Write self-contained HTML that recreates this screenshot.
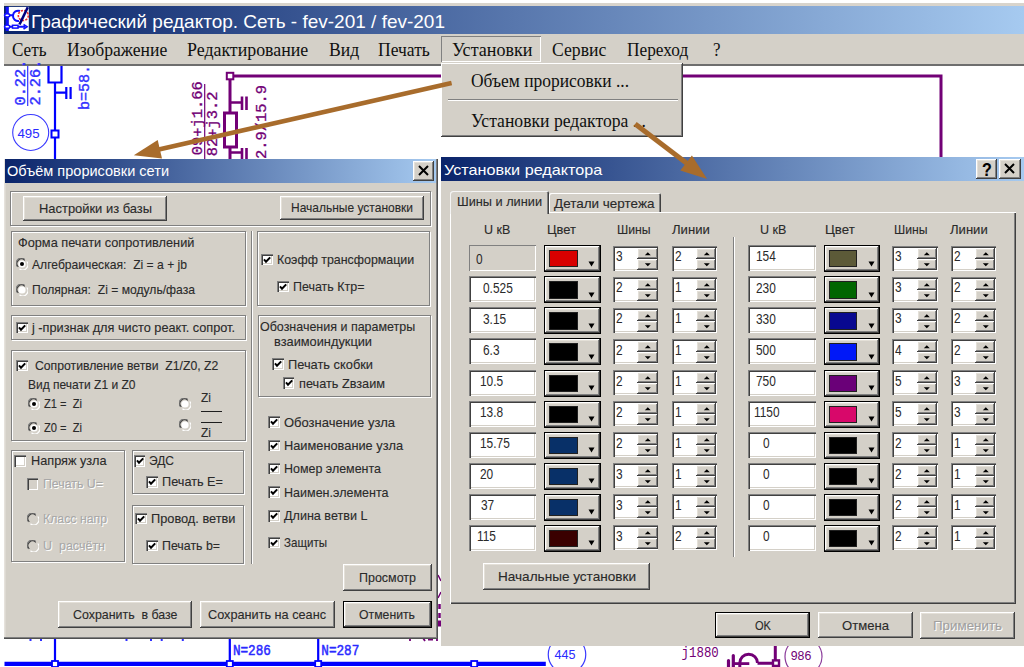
<!DOCTYPE html><html><head><meta charset="utf-8"><style>
*{margin:0;padding:0;box-sizing:border-box}
html,body{width:1024px;height:667px;overflow:hidden;background:#fff;position:relative}
.a{position:absolute}
.t{white-space:pre;transform-origin:0 0}
.d{-webkit-text-stroke:0.12px currentColor}
.btn{background:#d4d0c8;box-shadow:inset -1px -1px #404040,inset 1px 1px #fff,inset -2px -2px #808080,inset 2px 2px #e4e0d8}
.btnd{background:#d4d0c8;border:1px solid #000;box-shadow:inset -1px -1px #404040,inset 1px 1px #fff,inset -2px -2px #808080,inset 2px 2px #e4e0d8}
.grp{border:1px solid #808080;box-shadow:inset 1px 1px #fff,1px 1px #fff}
.chk{box-shadow:inset 1px 1px #808080,inset 2px 2px #404040,inset -1px -1px #fff,inset -2px -2px #d4d0c8}
.edit{background:#fff;box-shadow:inset 1px 1px #808080,inset 2px 2px #404040,inset -1px -1px #fff,inset -2px -2px #d4d0c8}
</style></head><body>
<div class="a " style="left:4px;top:3px;width:1020px;height:2.5px;background:#d8d4cc;"></div>
<div class="a " style="left:4px;top:5.5px;width:1020px;height:28.8px;background:linear-gradient(90deg,#0a246a 0%,#a6caf0 100%);"></div>
<svg class="a" style="left:0;top:0" width="40" height="40">
<rect x="8.5" y="6.9" width="20.3" height="24.1" fill="#fff"/>
<path d="M7.2 6.9 V31" stroke="#1010ff" stroke-width="3"/>
<path d="M7 15.3 H13 M7 26.7 H25" stroke="#1010ff" stroke-width="2"/>
<ellipse cx="7.2" cy="15.3" rx="2.6" ry="1.7" fill="#fff" stroke="#1010ff" stroke-width="1.6"/>
<ellipse cx="7.2" cy="26.7" rx="2.6" ry="1.7" fill="#fff" stroke="#1010ff" stroke-width="1.6"/>
<path d="M20 11 A5.2 5.2 0 1 0 19 21" stroke="#1010ff" stroke-width="2" fill="none"/>
<rect x="12.5" y="25.3" width="5.5" height="2.8" fill="#fff" stroke="#1010ff" stroke-width="1.5"/>
<path d="M23.5 24.5 L27 26.8 L23.5 29" stroke="#1010ff" stroke-width="1.6" fill="none"/>
<circle cx="23.3" cy="15.5" r="5" stroke="#f03030" stroke-width="1.6" stroke-dasharray="2.2 1.2" fill="none"/>
<path d="M27.8 7.2 L19.5 24.5" stroke="#000080" stroke-width="2.6"/>
</svg>
<div class="a t " style="left:31px;top:11.75px;font:19px/19px 'Liberation Sans',sans-serif;color:#fff;transform:scaleX(0.9995);">Графический редактор. Сеть - fev-201 / fev-201</div>
<div class="a " style="left:4px;top:34.3px;width:1020px;height:29.3px;background:#d4d0c8;"></div>
<div class="a " style="left:4px;top:63.6px;width:1020px;height:2px;background:#6e6e6e;"></div>
<div class="a " style="left:441.2px;top:36.2px;width:100.3px;height:25.8px;box-shadow:inset 1px 1px #808080,inset -1px -1px #fff;"></div>
<div class="a t " style="left:12.3px;top:40.31px;font:19px/19px 'Liberation Serif',serif;color:#101010;transform:scaleX(0.9006);">Сеть</div>
<div class="a t " style="left:66.8px;top:40.31px;font:19px/19px 'Liberation Serif',serif;color:#101010;transform:scaleX(0.9253);">Изображение</div>
<div class="a t " style="left:187.4px;top:40.31px;font:19px/19px 'Liberation Serif',serif;color:#101010;transform:scaleX(0.9405);">Редактирование</div>
<div class="a t " style="left:328.8px;top:40.31px;font:19px/19px 'Liberation Serif',serif;color:#101010;transform:scaleX(0.9290);">Вид</div>
<div class="a t " style="left:378.2px;top:40.31px;font:19px/19px 'Liberation Serif',serif;color:#101010;transform:scaleX(0.9226);">Печать</div>
<div class="a t " style="left:451.8px;top:40.31px;font:19px/19px 'Liberation Serif',serif;color:#101010;transform:scaleX(0.9502);">Установки</div>
<div class="a t " style="left:551.7px;top:40.31px;font:19px/19px 'Liberation Serif',serif;color:#101010;transform:scaleX(0.9296);">Сервис</div>
<div class="a t " style="left:626.8px;top:40.31px;font:19px/19px 'Liberation Serif',serif;color:#101010;transform:scaleX(0.9103);">Переход</div>
<div class="a t " style="left:713px;top:40.31px;font:19px/19px 'Liberation Serif',serif;color:#101010;transform:scaleX(0.8894);">?</div>
<svg class="a" style="left:0;top:0" width="1024" height="667"><path d="M55 83 V159" stroke="#0000ff" stroke-width="2.2"/><path d="M48.5 66 V82.5 H61.5 V66" stroke="#0000ff" stroke-width="2.2" fill="none"/><path d="M55 92.6 H66 M66.3 87 V99 M70.6 87 V99" stroke="#0000ff" stroke-width="2.2" fill="none"/><path d="M27.7 66 V106" stroke="#3030ff" stroke-width="1.2"/><circle cx="30.7" cy="132.5" r="18" stroke="#3a3aff" stroke-width="1.1" fill="none"/><rect x="51.5" y="130.5" width="7" height="7" stroke="#0000ff" stroke-width="2" fill="#fff"/><text transform="translate(17.5,137.5) scale(1.02,1)" font-family="Liberation Sans" font-size="13" fill="#2a2aff">495</text><text transform="translate(24.6,105.5) rotate(-90)" font-family="Liberation Mono" font-size="15.3" stroke="#3030ff" stroke-width="0.4" fill="#3030ff">0.22.</text><text transform="translate(40.3,105.5) rotate(-90)" font-family="Liberation Mono" font-size="15.3" stroke="#3030ff" stroke-width="0.4" fill="#3030ff">2.26.</text><text transform="translate(88.6,110) rotate(-90)" font-family="Liberation Mono" font-size="15" stroke="#3030ff" stroke-width="0.4" fill="#3030ff">b=58.</text><path d="M230 76 H941 V158 M230 76 V159" stroke="#720076" stroke-width="3" fill="none"/><rect x="226.8" y="72.8" width="6.5" height="6.5" stroke="#720076" stroke-width="2" fill="#fff"/><path d="M230 102.5 H243 M242 96.5 V110 M246.5 96.5 V110" stroke="#720076" stroke-width="2.6" fill="none"/><rect x="224.5" y="113" width="12" height="34" stroke="#720076" stroke-width="3" fill="#fff"/><path d="M230 152.5 H243 M242 148 V160 M246.5 148 V160" stroke="#720076" stroke-width="2.6" fill="none"/><path d="M204.7 84 V159" stroke="#720076" stroke-width="1.2"/><text transform="translate(202,155.2) rotate(-90)" font-family="Liberation Mono" font-size="15.4" stroke="#720076" stroke-width="0.3" fill="#720076">09+j1.66</text><text transform="translate(217,156.2) rotate(-90)" font-family="Liberation Mono" font-size="15.4" stroke="#720076" stroke-width="0.3" fill="#720076">82+j3.2</text><text transform="translate(266,159) rotate(-90)" font-family="Liberation Mono" font-size="15.4" stroke="#720076" stroke-width="0.3" fill="#720076">2.9/15.9</text><path d="M4.5 663.9 H545.8" stroke="#0000ff" stroke-width="4.4"/><path d="M55 638 V662 M229.8 638 V662 M318.2 638 V662" stroke="#0000ff" stroke-width="2.2"/><rect x="52" y="661" width="6" height="6" stroke="#0000ff" stroke-width="1.8" fill="#fff"/><rect x="226.8" y="661" width="6" height="6" stroke="#0000ff" stroke-width="1.8" fill="#fff"/><rect x="315.2" y="661" width="6" height="6" stroke="#0000ff" stroke-width="1.8" fill="#fff"/><rect x="471.2" y="661" width="6" height="6" stroke="#0000ff" stroke-width="1.8" fill="#fff"/><text transform="translate(232.9,655) scale(0.833,1)" font-family="Liberation Mono" font-size="15.2" stroke="#2a2aff" stroke-width="0.5" fill="#2a2aff">N=286</text><text transform="translate(321.3,655) scale(0.833,1)" font-family="Liberation Mono" font-size="15.2" stroke="#2a2aff" stroke-width="0.5" fill="#2a2aff">N=287</text><circle cx="567" cy="654.6" r="18.75" stroke="#3a3aff" stroke-width="1.2" fill="none"/><text transform="translate(554.6,659.3) scale(1,1)" font-family="Liberation Sans" font-size="12.6" fill="#2a2aff">445</text><text transform="translate(681.6,657) scale(0.867,1)" font-family="Liberation Mono" font-size="14.3" fill="#720076">j1880</text><path d="M775.3 645 V663 M757.5 663.2 H775 M739.8 668 V663 A8.8 8.8 0 0 1 757.5 663" stroke="#720076" stroke-width="3" fill="none"/><path d="M732 663.6 H749.3" stroke="#720076" stroke-width="2.8"/><path d="M728.5 660.5 V667 M733.3 655.5 V667" stroke="#720076" stroke-width="3.2" stroke-linecap="round"/><rect x="773" y="660.4" width="6" height="5.5" stroke="#720076" stroke-width="2.4" fill="#fff"/><circle cx="803.5" cy="656.5" r="18.5" stroke="#8a3a9a" stroke-width="1.2" fill="none"/><text transform="translate(790.7,659.5) scale(0.95,1)" font-family="Liberation Sans" font-size="13" fill="#720076">986</text><path d="M438 575 L441 581 M438 598 L441 592" stroke="#720076" stroke-width="1.5"/><path d="M439.5 604 V609 M439.5 613 V618" stroke="#720076" stroke-width="2.5"/><rect x="437.5" y="620.5" width="4" height="6" fill="#720076"/><path d="M410 638 V641 M423 638 L425 641 M428 639.5 H433 M437 638 V641" stroke="#720076" stroke-width="1.8"/><rect x="29.5" y="638.5" width="2" height="2.5" fill="#3030ff"/><rect x="40" y="638.5" width="2" height="2.5" fill="#3030ff"/><rect x="125.5" y="638.5" width="2" height="2.5" fill="#3030ff"/><rect x="150" y="638.5" width="2" height="2.5" fill="#3030ff"/><rect x="160.7" y="638.5" width="2" height="2.5" fill="#3030ff"/><rect x="181.8" y="638.5" width="2" height="2.5" fill="#3030ff"/></svg>
<div class="a " style="left:441px;top:62.5px;width:241.5px;height:74.5px;background:#d4d0c8;box-shadow:inset -1px -1px #404040,inset 1px 1px #fff,inset -2px -2px #808080;"></div>
<div class="a t " style="left:470.7px;top:70.81px;font:19px/19px 'Liberation Serif',serif;color:#101010;transform:scaleX(0.9181);">Объем прорисовки ...</div>
<div class="a " style="left:448px;top:98.5px;width:230px;height:1.3px;background:#808080;"></div>
<div class="a " style="left:448px;top:99.8px;width:230px;height:1.2px;background:#fff;"></div>
<div class="a t " style="left:471px;top:110.51px;font:19px/19px 'Liberation Serif',serif;color:#101010;transform:scaleX(0.9278);">Установки редактора ...</div>
<div class="a " style="left:4.3px;top:159px;width:433.9px;height:479.9px;background:#d4d0c8;box-shadow:inset -1px -1px #505050,inset -2px -2px #808080,inset 1.5px 0 #e6e2dc;"></div>
<div class="a " style="left:4.6px;top:159px;width:431px;height:24px;background:linear-gradient(90deg,#0a246a,#a6caf0);"></div>
<div class="a t " style="left:6.8px;top:163.46px;font:15px/15px 'Liberation Sans',sans-serif;color:#fff;transform:scaleX(0.9691);">Объём прорисовки сети</div>
<div class="a btn" style="left:413px;top:161px;width:20.6px;height:19.7px;"></div>
<svg class="a" style="left:413px;top:161px" width="21" height="20"><path d="M6 5 L15 14 M15 5 L6 14" stroke="#000" stroke-width="2"/></svg>
<div class="a grp" style="left:10px;top:190.5px;width:420.5px;height:35.3px;"></div>
<div class="a btn" style="left:23px;top:196px;width:144px;height:25px;"></div>
<div class="a t d" style="left:38.5px;top:201.96px;font:13px/13px 'Liberation Sans',sans-serif;color:#2a2a2a;transform:scaleX(0.9936);">Настройки из базы</div>
<div class="a btn" style="left:280.4px;top:195.7px;width:143.8px;height:24.6px;"></div>
<div class="a t d" style="left:291.3px;top:201.46px;font:13px/13px 'Liberation Sans',sans-serif;color:#2a2a2a;transform:scaleX(0.9227);">Начальные установки</div>
<div class="a grp" style="left:11px;top:230.5px;width:234.7px;height:75.9px;"></div>
<div class="a t d" style="left:18px;top:235.86px;font:13px/13px 'Liberation Sans',sans-serif;color:#2a2a2a;transform:scaleX(0.9803);">Форма печати сопротивлений</div>
<svg class="a" style="left:15.8px;top:258.4px" width="12" height="12"><path d="M1.2 8.5 A5.2 5.2 0 0 1 8.5 1.2" stroke="#808080" stroke-width="1.2" fill="none"/><path d="M2.3 8.8 A4.2 4.2 0 0 1 8.8 2.3" stroke="#404040" stroke-width="1.2" fill="none"/><path d="M3.5 10.8 A5.2 5.2 0 0 0 10.8 3.5" stroke="#fff" stroke-width="1.2" fill="none"/><circle cx="6" cy="6" r="3.6" fill="#fff"/><circle cx="6" cy="6" r="2" fill="#000"/></svg>
<div class="a t d" style="left:32px;top:257.86px;font:13px/13px 'Liberation Sans',sans-serif;color:#2a2a2a;transform:scaleX(0.9317);">Алгебраическая:  Zi = a + jb</div>
<svg class="a" style="left:15.8px;top:283.5px" width="12" height="12"><path d="M1.2 8.5 A5.2 5.2 0 0 1 8.5 1.2" stroke="#808080" stroke-width="1.2" fill="none"/><path d="M2.3 8.8 A4.2 4.2 0 0 1 8.8 2.3" stroke="#404040" stroke-width="1.2" fill="none"/><path d="M3.5 10.8 A5.2 5.2 0 0 0 10.8 3.5" stroke="#fff" stroke-width="1.2" fill="none"/><circle cx="6" cy="6" r="3.6" fill="#fff"/></svg>
<div class="a t d" style="left:32px;top:282.96px;font:13px/13px 'Liberation Sans',sans-serif;color:#2a2a2a;transform:scaleX(0.9331);">Полярная:  Zi = модуль/фаза</div>
<div class="a grp" style="left:257.3px;top:230.5px;width:173.2px;height:75.9px;"></div>
<div class="a chk" style="left:261px;top:253.6px;width:11.6px;height:11.6px;background:#fff;"><svg width="12" height="12" style="position:absolute;left:0;top:0"><path d="M3 5.4 L5 7.8 L9.2 3.4" stroke="#000" stroke-width="2" fill="none"/></svg></div>
<div class="a t d" style="left:277.2px;top:252.86px;font:13px/13px 'Liberation Sans',sans-serif;color:#2a2a2a;transform:scaleX(0.9539);">Коэфф трансформации</div>
<div class="a chk" style="left:277.2px;top:280.7px;width:11.6px;height:11.6px;background:#fff;"><svg width="12" height="12" style="position:absolute;left:0;top:0"><path d="M3 5.4 L5 7.8 L9.2 3.4" stroke="#000" stroke-width="2" fill="none"/></svg></div>
<div class="a t d" style="left:293px;top:279.96px;font:13px/13px 'Liberation Sans',sans-serif;color:#2a2a2a;transform:scaleX(0.9578);">Печать Ктр=</div>
<div class="a " style="left:250.8px;top:230.5px;width:1px;height:333.1px;background:#808080;"></div>
<div class="a " style="left:251.8px;top:230.5px;width:1px;height:333.1px;background:#fff;"></div>
<div class="a grp" style="left:11px;top:314.6px;width:234.7px;height:25.4px;"></div>
<div class="a chk" style="left:16.2px;top:321.6px;width:11.6px;height:11.6px;background:#fff;"><svg width="12" height="12" style="position:absolute;left:0;top:0"><path d="M3 5.4 L5 7.8 L9.2 3.4" stroke="#000" stroke-width="2" fill="none"/></svg></div>
<div class="a t d" style="left:31.5px;top:320.86px;font:13px/13px 'Liberation Sans',sans-serif;color:#2a2a2a;transform:scaleX(0.9782);">j -признак для чисто реакт. сопрот.</div>
<div class="a grp" style="left:258px;top:314.6px;width:172.5px;height:82.8px;"></div>
<div class="a t d" style="left:259.6px;top:319.96px;font:13px/13px 'Liberation Sans',sans-serif;color:#2a2a2a;transform:scaleX(0.9599);">Обозначения и параметры</div>
<div class="a t d" style="left:274.2px;top:335.06px;font:13px/13px 'Liberation Sans',sans-serif;color:#2a2a2a;transform:scaleX(0.9843);">взаимоиндукции</div>
<div class="a chk" style="left:272px;top:358.3px;width:11.6px;height:11.6px;background:#fff;"><svg width="12" height="12" style="position:absolute;left:0;top:0"><path d="M3 5.4 L5 7.8 L9.2 3.4" stroke="#000" stroke-width="2" fill="none"/></svg></div>
<div class="a t d" style="left:287.7px;top:357.56px;font:13px/13px 'Liberation Sans',sans-serif;color:#2a2a2a;transform:scaleX(0.9866);">Печать скобки</div>
<div class="a chk" style="left:282.8px;top:377.4px;width:11.6px;height:11.6px;background:#fff;"><svg width="12" height="12" style="position:absolute;left:0;top:0"><path d="M3 5.4 L5 7.8 L9.2 3.4" stroke="#000" stroke-width="2" fill="none"/></svg></div>
<div class="a t d" style="left:298.5px;top:376.66px;font:13px/13px 'Liberation Sans',sans-serif;color:#2a2a2a;transform:scaleX(0.9774);">печать Zвзаим</div>
<div class="a grp" style="left:11px;top:349.5px;width:234.7px;height:91.7px;"></div>
<div class="a chk" style="left:16.2px;top:359.9px;width:11.6px;height:11.6px;background:#fff;"><svg width="12" height="12" style="position:absolute;left:0;top:0"><path d="M3 5.4 L5 7.8 L9.2 3.4" stroke="#000" stroke-width="2" fill="none"/></svg></div>
<div class="a t d" style="left:34.9px;top:359.16px;font:13px/13px 'Liberation Sans',sans-serif;color:#2a2a2a;transform:scaleX(0.9400);">Сопротивление ветви  Z1/Z0, Z2</div>
<div class="a t d" style="left:28px;top:378.46px;font:13px/13px 'Liberation Sans',sans-serif;color:#2a2a2a;transform:scaleX(0.9240);">Вид печати Z1 и Z0</div>
<svg class="a" style="left:28.2px;top:398px" width="12" height="12"><path d="M1.2 8.5 A5.2 5.2 0 0 1 8.5 1.2" stroke="#808080" stroke-width="1.2" fill="none"/><path d="M2.3 8.8 A4.2 4.2 0 0 1 8.8 2.3" stroke="#404040" stroke-width="1.2" fill="none"/><path d="M3.5 10.8 A5.2 5.2 0 0 0 10.8 3.5" stroke="#fff" stroke-width="1.2" fill="none"/><circle cx="6" cy="6" r="3.6" fill="#fff"/><circle cx="6" cy="6" r="2" fill="#000"/></svg>
<div class="a t d" style="left:43.9px;top:397.46px;font:13px/13px 'Liberation Sans',sans-serif;color:#2a2a2a;transform:scaleX(0.8553);">Z1 =  Zi</div>
<svg class="a" style="left:28.2px;top:421.5px" width="12" height="12"><path d="M1.2 8.5 A5.2 5.2 0 0 1 8.5 1.2" stroke="#808080" stroke-width="1.2" fill="none"/><path d="M2.3 8.8 A4.2 4.2 0 0 1 8.8 2.3" stroke="#404040" stroke-width="1.2" fill="none"/><path d="M3.5 10.8 A5.2 5.2 0 0 0 10.8 3.5" stroke="#fff" stroke-width="1.2" fill="none"/><circle cx="6" cy="6" r="3.6" fill="#fff"/><circle cx="6" cy="6" r="2" fill="#000"/></svg>
<div class="a t d" style="left:43.9px;top:420.96px;font:13px/13px 'Liberation Sans',sans-serif;color:#2a2a2a;transform:scaleX(0.8553);">Z0 =  Zi</div>
<svg class="a" style="left:179.2px;top:397.8px" width="12" height="12"><path d="M1.2 8.5 A5.2 5.2 0 0 1 8.5 1.2" stroke="#808080" stroke-width="1.2" fill="none"/><path d="M2.3 8.8 A4.2 4.2 0 0 1 8.8 2.3" stroke="#404040" stroke-width="1.2" fill="none"/><path d="M3.5 10.8 A5.2 5.2 0 0 0 10.8 3.5" stroke="#fff" stroke-width="1.2" fill="none"/><circle cx="6" cy="6" r="3.6" fill="#fff"/></svg>
<svg class="a" style="left:179.2px;top:418.7px" width="12" height="12"><path d="M1.2 8.5 A5.2 5.2 0 0 1 8.5 1.2" stroke="#808080" stroke-width="1.2" fill="none"/><path d="M2.3 8.8 A4.2 4.2 0 0 1 8.8 2.3" stroke="#404040" stroke-width="1.2" fill="none"/><path d="M3.5 10.8 A5.2 5.2 0 0 0 10.8 3.5" stroke="#fff" stroke-width="1.2" fill="none"/><circle cx="6" cy="6" r="3.6" fill="#fff"/></svg>
<div class="a t d" style="left:200.9px;top:391.26px;font:13px/13px 'Liberation Sans',sans-serif;color:#2a2a2a;transform:scaleX(0.9234);">Zi</div>
<div class="a " style="left:200.9px;top:410.6px;width:21.3px;height:1.2px;background:#1e1e1e;"></div>
<div class="a " style="left:200.9px;top:421.9px;width:21.3px;height:1.2px;background:#1e1e1e;"></div>
<div class="a t d" style="left:200.9px;top:426.06px;font:13px/13px 'Liberation Sans',sans-serif;color:#2a2a2a;transform:scaleX(0.9234);">Zi</div>
<div class="a chk" style="left:268.3px;top:416.3px;width:11.6px;height:11.6px;background:#fff;"><svg width="12" height="12" style="position:absolute;left:0;top:0"><path d="M3 5.4 L5 7.8 L9.2 3.4" stroke="#000" stroke-width="2" fill="none"/></svg></div>
<div class="a t d" style="left:284.3px;top:415.56px;font:13px/13px 'Liberation Sans',sans-serif;color:#2a2a2a;transform:scaleX(0.9987);">Обозначение узла</div>
<div class="a chk" style="left:268.3px;top:439.8px;width:11.6px;height:11.6px;background:#fff;"><svg width="12" height="12" style="position:absolute;left:0;top:0"><path d="M3 5.4 L5 7.8 L9.2 3.4" stroke="#000" stroke-width="2" fill="none"/></svg></div>
<div class="a t d" style="left:284.3px;top:439.06px;font:13px/13px 'Liberation Sans',sans-serif;color:#2a2a2a;transform:scaleX(0.9846);">Наименование узла</div>
<div class="a chk" style="left:268.3px;top:462.7px;width:11.6px;height:11.6px;background:#fff;"><svg width="12" height="12" style="position:absolute;left:0;top:0"><path d="M3 5.4 L5 7.8 L9.2 3.4" stroke="#000" stroke-width="2" fill="none"/></svg></div>
<div class="a t d" style="left:284.3px;top:461.96px;font:13px/13px 'Liberation Sans',sans-serif;color:#2a2a2a;transform:scaleX(0.9587);">Номер элемента</div>
<div class="a chk" style="left:268.3px;top:486.4px;width:11.6px;height:11.6px;background:#fff;"><svg width="12" height="12" style="position:absolute;left:0;top:0"><path d="M3 5.4 L5 7.8 L9.2 3.4" stroke="#000" stroke-width="2" fill="none"/></svg></div>
<div class="a t d" style="left:284.3px;top:485.66px;font:13px/13px 'Liberation Sans',sans-serif;color:#2a2a2a;transform:scaleX(0.9641);">Наимен.элемента</div>
<div class="a chk" style="left:268.3px;top:510.2px;width:11.6px;height:11.6px;background:#fff;"><svg width="12" height="12" style="position:absolute;left:0;top:0"><path d="M3 5.4 L5 7.8 L9.2 3.4" stroke="#000" stroke-width="2" fill="none"/></svg></div>
<div class="a t d" style="left:284.3px;top:509.46px;font:13px/13px 'Liberation Sans',sans-serif;color:#2a2a2a;transform:scaleX(0.9687);">Длина ветви L</div>
<div class="a chk" style="left:268.3px;top:536.5px;width:11.6px;height:11.6px;background:#fff;"><svg width="12" height="12" style="position:absolute;left:0;top:0"><path d="M3 5.4 L5 7.8 L9.2 3.4" stroke="#000" stroke-width="2" fill="none"/></svg></div>
<div class="a t d" style="left:284.3px;top:535.76px;font:13px/13px 'Liberation Sans',sans-serif;color:#2a2a2a;transform:scaleX(0.8896);">Защиты</div>
<div class="a grp" style="left:11px;top:450.3px;width:113.5px;height:111.7px;"></div>
<div class="a chk" style="left:14.2px;top:455px;width:11.6px;height:11.6px;background:#fff;"></div>
<div class="a t d" style="left:30.5px;top:454.26px;font:13px/13px 'Liberation Sans',sans-serif;color:#2a2a2a;transform:scaleX(0.9777);">Напряж узла</div>
<div class="a chk" style="left:26.9px;top:478.2px;width:11.6px;height:11.6px;background:#d4d0c8;"></div>
<div class="a t d" style="left:43.7px;top:478.46px;font:13px/13px 'Liberation Sans',sans-serif;color:#fff;transform:scaleX(0.9497);">Печать U=</div>
<div class="a t d" style="left:42.7px;top:477.46px;font:13px/13px 'Liberation Sans',sans-serif;color:#a8a8a8;transform:scaleX(0.9497);">Печать U=</div>
<svg class="a" style="left:26.5px;top:512.6px" width="12" height="12"><path d="M1.2 8.5 A5.2 5.2 0 0 1 8.5 1.2" stroke="#808080" stroke-width="1.2" fill="none"/><path d="M2.3 8.8 A4.2 4.2 0 0 1 8.8 2.3" stroke="#404040" stroke-width="1.2" fill="none"/><path d="M3.5 10.8 A5.2 5.2 0 0 0 10.8 3.5" stroke="#fff" stroke-width="1.2" fill="none"/><circle cx="6" cy="6" r="3.6" fill="#d4d0c8"/></svg>
<div class="a t d" style="left:43.7px;top:513.06px;font:13px/13px 'Liberation Sans',sans-serif;color:#fff;transform:scaleX(0.9456);">Класс напр</div>
<div class="a t d" style="left:42.7px;top:512.06px;font:13px/13px 'Liberation Sans',sans-serif;color:#a8a8a8;transform:scaleX(0.9456);">Класс напр</div>
<svg class="a" style="left:26.5px;top:539.5px" width="12" height="12"><path d="M1.2 8.5 A5.2 5.2 0 0 1 8.5 1.2" stroke="#808080" stroke-width="1.2" fill="none"/><path d="M2.3 8.8 A4.2 4.2 0 0 1 8.8 2.3" stroke="#404040" stroke-width="1.2" fill="none"/><path d="M3.5 10.8 A5.2 5.2 0 0 0 10.8 3.5" stroke="#fff" stroke-width="1.2" fill="none"/><circle cx="6" cy="6" r="3.6" fill="#d4d0c8"/></svg>
<div class="a t d" style="left:43.7px;top:539.96px;font:13px/13px 'Liberation Sans',sans-serif;color:#fff;transform:scaleX(0.9603);">U  расчётн</div>
<div class="a t d" style="left:42.7px;top:538.96px;font:13px/13px 'Liberation Sans',sans-serif;color:#a8a8a8;transform:scaleX(0.9603);">U  расчётн</div>
<div class="a grp" style="left:131.8px;top:450.3px;width:111.9px;height:43.9px;"></div>
<div class="a chk" style="left:133.8px;top:455px;width:11.6px;height:11.6px;background:#fff;"><svg width="12" height="12" style="position:absolute;left:0;top:0"><path d="M3 5.4 L5 7.8 L9.2 3.4" stroke="#000" stroke-width="2" fill="none"/></svg></div>
<div class="a t d" style="left:149.4px;top:454.26px;font:13px/13px 'Liberation Sans',sans-serif;color:#2a2a2a;transform:scaleX(0.9223);">ЭДС</div>
<div class="a chk" style="left:146px;top:476.2px;width:11.6px;height:11.6px;background:#fff;"><svg width="12" height="12" style="position:absolute;left:0;top:0"><path d="M3 5.4 L5 7.8 L9.2 3.4" stroke="#000" stroke-width="2" fill="none"/></svg></div>
<div class="a t d" style="left:161.6px;top:475.46px;font:13px/13px 'Liberation Sans',sans-serif;color:#2a2a2a;transform:scaleX(0.9766);">Печать E=</div>
<div class="a grp" style="left:131.8px;top:504.7px;width:111.9px;height:59.8px;"></div>
<div class="a chk" style="left:135px;top:512.8px;width:11.6px;height:11.6px;background:#fff;"><svg width="12" height="12" style="position:absolute;left:0;top:0"><path d="M3 5.4 L5 7.8 L9.2 3.4" stroke="#000" stroke-width="2" fill="none"/></svg></div>
<div class="a t d" style="left:150.9px;top:512.06px;font:13px/13px 'Liberation Sans',sans-serif;color:#2a2a2a;transform:scaleX(0.9826);">Провод. ветви</div>
<div class="a chk" style="left:146px;top:539.7px;width:11.6px;height:11.6px;background:#fff;"><svg width="12" height="12" style="position:absolute;left:0;top:0"><path d="M3 5.4 L5 7.8 L9.2 3.4" stroke="#000" stroke-width="2" fill="none"/></svg></div>
<div class="a t d" style="left:161.6px;top:538.96px;font:13px/13px 'Liberation Sans',sans-serif;color:#2a2a2a;transform:scaleX(0.9505);">Печать b=</div>
<div class="a btn" style="left:342.7px;top:564px;width:89.3px;height:26.7px;"></div>
<div class="a t d" style="left:358.85px;top:570.81px;font:13px/13px 'Liberation Sans',sans-serif;color:#2a2a2a;transform:scaleX(0.9601);">Просмотр</div>
<div class="a btn" style="left:58.4px;top:601px;width:133.9px;height:26.5px;"></div>
<div class="a t d" style="left:73.1px;top:607.71px;font:13px/13px 'Liberation Sans',sans-serif;color:#2a2a2a;transform:scaleX(0.9533);">Сохранить  в базе</div>
<div class="a btn" style="left:200px;top:601px;width:134.7px;height:26.5px;"></div>
<div class="a t d" style="left:208.35px;top:607.71px;font:13px/13px 'Liberation Sans',sans-serif;color:#2a2a2a;transform:scaleX(0.9762);">Сохранить на сеанс</div>
<div class="a btnd" style="left:342.7px;top:601px;width:89.5px;height:26.7px;"></div>
<div class="a t d" style="left:359.45px;top:607.81px;font:13px/13px 'Liberation Sans',sans-serif;color:#2a2a2a;transform:scaleX(0.9427);">Отменить</div>
<div class="a " style="left:441px;top:157px;width:583px;height:488.6px;background:#d4d0c8;"></div>
<div class="a " style="left:441px;top:157px;width:583px;height:23.7px;background:linear-gradient(90deg,#0a246a,#a6caf0 100%);"></div>
<div class="a t " style="left:443.8px;top:161.66px;font:15px/15px 'Liberation Sans',sans-serif;color:#fff;transform:scaleX(1.0785);">Установки редактора</div>
<div class="a btn" style="left:975.8px;top:159.2px;width:20.9px;height:19.5px;"></div>
<div class="a t d" style="left:981.8px;top:160.55px;font:bold 18px/18px 'Liberation Sans',sans-serif;color:#000;transform:scaleX(0.8913);">?</div>
<div class="a btn" style="left:999.4px;top:159.2px;width:21.3px;height:19.5px;"></div>
<svg class="a" style="left:999.4px;top:159.2px" width="21" height="20"><path d="M6 5 L15 14 M15 5 L6 14" stroke="#000" stroke-width="2"/></svg>
<div class="a " style="left:450px;top:212px;width:566px;height:392px;box-shadow:inset 1px 1px #fff,inset -1px -1px #404040,inset -2px -2px #808080;"></div>
<div class="a " style="left:549px;top:192.8px;width:112px;height:19.7px;background:#d4d0c8;border-radius:2px 2px 0 0;box-shadow:inset 1px 1px #fff,inset -1px 0 #404040,inset -2px 0 #808080;"></div>
<div class="a t d" style="left:554px;top:196.86px;font:13px/13px 'Liberation Sans',sans-serif;color:#2a2a2a;transform:scaleX(1.0365);">Детали чертежа</div>
<div class="a " style="left:449.8px;top:190.5px;width:99.7px;height:23.5px;background:#d4d0c8;border-radius:3px 2px 0 0;box-shadow:inset 1px 1px #f4f4f4,inset -1px 0 #404040,inset -2px 0 #808080;"></div>
<div class="a t d" style="left:456.9px;top:195.06px;font:13px/13px 'Liberation Sans',sans-serif;color:#2a2a2a;transform:scaleX(0.9800);">Шины и линии</div>
<div class="a t d" style="left:484px;top:223.46px;font:13px/13px 'Liberation Sans',sans-serif;color:#2a2a2a;transform:scaleX(0.9613);">U кВ</div>
<div class="a t d" style="left:546.6px;top:223.46px;font:13px/13px 'Liberation Sans',sans-serif;color:#2a2a2a;transform:scaleX(0.9955);">Цвет</div>
<div class="a t d" style="left:617.4px;top:223.46px;font:13px/13px 'Liberation Sans',sans-serif;color:#2a2a2a;transform:scaleX(0.9412);">Шины</div>
<div class="a t d" style="left:672.3px;top:223.46px;font:13px/13px 'Liberation Sans',sans-serif;color:#2a2a2a;transform:scaleX(1.0081);">Линии</div>
<div class="a t d" style="left:759.5px;top:223.46px;font:13px/13px 'Liberation Sans',sans-serif;color:#2a2a2a;transform:scaleX(0.9650);">U кВ</div>
<div class="a t d" style="left:825.4px;top:223.46px;font:13px/13px 'Liberation Sans',sans-serif;color:#2a2a2a;transform:scaleX(1.0196);">Цвет</div>
<div class="a t d" style="left:893.7px;top:223.46px;font:13px/13px 'Liberation Sans',sans-serif;color:#2a2a2a;transform:scaleX(0.9384);">Шины</div>
<div class="a t d" style="left:949.5px;top:223.46px;font:13px/13px 'Liberation Sans',sans-serif;color:#2a2a2a;transform:scaleX(1.0054);">Линии</div>
<div class="a " style="left:732.8px;top:237px;width:1px;height:320px;background:#808080;"></div>
<div class="a " style="left:733.8px;top:237px;width:1px;height:320px;background:#fff;"></div>
<div class="a " style="left:469px;top:245.3px;width:67.3px;height:26px;background:#d4d0c8;box-shadow:inset 1px 1px #808080,inset -1px -1px #fff;"></div>
<div class="a t " style="left:476.4px;top:252.16px;font:14px/14px 'Liberation Sans',sans-serif;color:#2a2a2a;transform:scaleX(0.8500);">0</div>
<div class="a btnd" style="left:544.2px;top:245.3px;width:56.8px;height:27px;"></div>
<div class="a " style="left:549.2px;top:250.3px;width:28.4px;height:17.2px;background:#d80000;border:1px solid #202020;"></div>
<svg class="a" style="left:588.2px;top:259.8px" width="8" height="8"><path d="M0.5 1.5 H6.5 L3.5 6.5Z" fill="#000"/></svg>
<div class="a edit" style="left:612.9px;top:245.6px;width:45.5px;height:25px;"></div>
<div class="a btn" style="left:637.4px;top:247.6px;width:20.2px;height:11px;"></div>
<div class="a btn" style="left:637.4px;top:258.6px;width:20.2px;height:11.2px;"></div>
<svg class="a" style="left:636.9px;top:247.6px" width="20" height="22"><path d="M7.8 7.2 L10.8 4.2 L13.8 7.2Z M7.8 15.2 L10.8 18.2 L13.8 15.2Z" fill="#000"/></svg>
<div class="a t " style="left:615.9px;top:249.36px;font:14px/14px 'Liberation Sans',sans-serif;color:#2a2a2a;transform:scaleX(0.8500);">3</div>
<div class="a edit" style="left:671.8px;top:245.6px;width:45.5px;height:25px;"></div>
<div class="a btn" style="left:696.3px;top:247.6px;width:20.2px;height:11px;"></div>
<div class="a btn" style="left:696.3px;top:258.6px;width:20.2px;height:11.2px;"></div>
<svg class="a" style="left:695.8px;top:247.6px" width="20" height="22"><path d="M7.8 7.2 L10.8 4.2 L13.8 7.2Z M7.8 15.2 L10.8 18.2 L13.8 15.2Z" fill="#000"/></svg>
<div class="a t " style="left:674.8px;top:249.36px;font:14px/14px 'Liberation Sans',sans-serif;color:#2a2a2a;transform:scaleX(0.8500);">2</div>
<div class="a edit" style="left:747.7px;top:245.3px;width:68px;height:26px;"></div>
<div class="a t " style="left:756.2px;top:249.46px;font:14px/14px 'Liberation Sans',sans-serif;color:#2a2a2a;transform:scaleX(0.8500);">154</div>
<div class="a btnd" style="left:823.6px;top:245.3px;width:56.4px;height:27px;"></div>
<div class="a " style="left:828.6px;top:250.3px;width:28.4px;height:17.2px;background:#5c5a38;border:1px solid #202020;"></div>
<svg class="a" style="left:867.6px;top:259.8px" width="8" height="8"><path d="M0.5 1.5 H6.5 L3.5 6.5Z" fill="#000"/></svg>
<div class="a edit" style="left:892px;top:245.6px;width:45.5px;height:25px;"></div>
<div class="a btn" style="left:916.5px;top:247.6px;width:20.2px;height:11px;"></div>
<div class="a btn" style="left:916.5px;top:258.6px;width:20.2px;height:11.2px;"></div>
<svg class="a" style="left:916px;top:247.6px" width="20" height="22"><path d="M7.8 7.2 L10.8 4.2 L13.8 7.2Z M7.8 15.2 L10.8 18.2 L13.8 15.2Z" fill="#000"/></svg>
<div class="a t " style="left:895px;top:249.36px;font:14px/14px 'Liberation Sans',sans-serif;color:#2a2a2a;transform:scaleX(0.8500);">3</div>
<div class="a edit" style="left:950.8px;top:245.6px;width:45.5px;height:25px;"></div>
<div class="a btn" style="left:975.3px;top:247.6px;width:20.2px;height:11px;"></div>
<div class="a btn" style="left:975.3px;top:258.6px;width:20.2px;height:11.2px;"></div>
<svg class="a" style="left:974.8px;top:247.6px" width="20" height="22"><path d="M7.8 7.2 L10.8 4.2 L13.8 7.2Z M7.8 15.2 L10.8 18.2 L13.8 15.2Z" fill="#000"/></svg>
<div class="a t " style="left:953.8px;top:249.36px;font:14px/14px 'Liberation Sans',sans-serif;color:#2a2a2a;transform:scaleX(0.8500);">2</div>
<div class="a edit" style="left:469px;top:276.35px;width:67.3px;height:26px;"></div>
<div class="a t " style="left:482.7px;top:280.51px;font:14px/14px 'Liberation Sans',sans-serif;color:#2a2a2a;transform:scaleX(0.8500);">0.525</div>
<div class="a btnd" style="left:544.2px;top:276.35px;width:56.8px;height:27px;"></div>
<div class="a " style="left:549.2px;top:281.35px;width:28.4px;height:17.2px;background:#000;border:1px solid #202020;"></div>
<svg class="a" style="left:588.2px;top:290.85px" width="8" height="8"><path d="M0.5 1.5 H6.5 L3.5 6.5Z" fill="#000"/></svg>
<div class="a edit" style="left:612.9px;top:276.65px;width:45.5px;height:25px;"></div>
<div class="a btn" style="left:637.4px;top:278.65px;width:20.2px;height:11px;"></div>
<div class="a btn" style="left:637.4px;top:289.65px;width:20.2px;height:11.2px;"></div>
<svg class="a" style="left:636.9px;top:278.65px" width="20" height="22"><path d="M7.8 7.2 L10.8 4.2 L13.8 7.2Z M7.8 15.2 L10.8 18.2 L13.8 15.2Z" fill="#000"/></svg>
<div class="a t " style="left:615.9px;top:280.41px;font:14px/14px 'Liberation Sans',sans-serif;color:#2a2a2a;transform:scaleX(0.8500);">2</div>
<div class="a edit" style="left:671.8px;top:276.65px;width:45.5px;height:25px;"></div>
<div class="a btn" style="left:696.3px;top:278.65px;width:20.2px;height:11px;"></div>
<div class="a btn" style="left:696.3px;top:289.65px;width:20.2px;height:11.2px;"></div>
<svg class="a" style="left:695.8px;top:278.65px" width="20" height="22"><path d="M7.8 7.2 L10.8 4.2 L13.8 7.2Z M7.8 15.2 L10.8 18.2 L13.8 15.2Z" fill="#000"/></svg>
<div class="a t " style="left:674.8px;top:280.41px;font:14px/14px 'Liberation Sans',sans-serif;color:#2a2a2a;transform:scaleX(0.8500);">1</div>
<div class="a edit" style="left:747.7px;top:276.35px;width:68px;height:26px;"></div>
<div class="a t " style="left:756.2px;top:280.51px;font:14px/14px 'Liberation Sans',sans-serif;color:#2a2a2a;transform:scaleX(0.8500);">230</div>
<div class="a btnd" style="left:823.6px;top:276.35px;width:56.4px;height:27px;"></div>
<div class="a " style="left:828.6px;top:281.35px;width:28.4px;height:17.2px;background:#006600;border:1px solid #202020;"></div>
<svg class="a" style="left:867.6px;top:290.85px" width="8" height="8"><path d="M0.5 1.5 H6.5 L3.5 6.5Z" fill="#000"/></svg>
<div class="a edit" style="left:892px;top:276.65px;width:45.5px;height:25px;"></div>
<div class="a btn" style="left:916.5px;top:278.65px;width:20.2px;height:11px;"></div>
<div class="a btn" style="left:916.5px;top:289.65px;width:20.2px;height:11.2px;"></div>
<svg class="a" style="left:916px;top:278.65px" width="20" height="22"><path d="M7.8 7.2 L10.8 4.2 L13.8 7.2Z M7.8 15.2 L10.8 18.2 L13.8 15.2Z" fill="#000"/></svg>
<div class="a t " style="left:895px;top:280.41px;font:14px/14px 'Liberation Sans',sans-serif;color:#2a2a2a;transform:scaleX(0.8500);">3</div>
<div class="a edit" style="left:950.8px;top:276.65px;width:45.5px;height:25px;"></div>
<div class="a btn" style="left:975.3px;top:278.65px;width:20.2px;height:11px;"></div>
<div class="a btn" style="left:975.3px;top:289.65px;width:20.2px;height:11.2px;"></div>
<svg class="a" style="left:974.8px;top:278.65px" width="20" height="22"><path d="M7.8 7.2 L10.8 4.2 L13.8 7.2Z M7.8 15.2 L10.8 18.2 L13.8 15.2Z" fill="#000"/></svg>
<div class="a t " style="left:953.8px;top:280.41px;font:14px/14px 'Liberation Sans',sans-serif;color:#2a2a2a;transform:scaleX(0.8500);">2</div>
<div class="a edit" style="left:469px;top:307.4px;width:67.3px;height:26px;"></div>
<div class="a t " style="left:482.7px;top:311.56px;font:14px/14px 'Liberation Sans',sans-serif;color:#2a2a2a;transform:scaleX(0.8500);">3.15</div>
<div class="a btnd" style="left:544.2px;top:307.4px;width:56.8px;height:27px;"></div>
<div class="a " style="left:549.2px;top:312.4px;width:28.4px;height:17.2px;background:#000;border:1px solid #202020;"></div>
<svg class="a" style="left:588.2px;top:321.9px" width="8" height="8"><path d="M0.5 1.5 H6.5 L3.5 6.5Z" fill="#000"/></svg>
<div class="a edit" style="left:612.9px;top:307.7px;width:45.5px;height:25px;"></div>
<div class="a btn" style="left:637.4px;top:309.7px;width:20.2px;height:11px;"></div>
<div class="a btn" style="left:637.4px;top:320.7px;width:20.2px;height:11.2px;"></div>
<svg class="a" style="left:636.9px;top:309.7px" width="20" height="22"><path d="M7.8 7.2 L10.8 4.2 L13.8 7.2Z M7.8 15.2 L10.8 18.2 L13.8 15.2Z" fill="#000"/></svg>
<div class="a t " style="left:615.9px;top:311.46px;font:14px/14px 'Liberation Sans',sans-serif;color:#2a2a2a;transform:scaleX(0.8500);">2</div>
<div class="a edit" style="left:671.8px;top:307.7px;width:45.5px;height:25px;"></div>
<div class="a btn" style="left:696.3px;top:309.7px;width:20.2px;height:11px;"></div>
<div class="a btn" style="left:696.3px;top:320.7px;width:20.2px;height:11.2px;"></div>
<svg class="a" style="left:695.8px;top:309.7px" width="20" height="22"><path d="M7.8 7.2 L10.8 4.2 L13.8 7.2Z M7.8 15.2 L10.8 18.2 L13.8 15.2Z" fill="#000"/></svg>
<div class="a t " style="left:674.8px;top:311.46px;font:14px/14px 'Liberation Sans',sans-serif;color:#2a2a2a;transform:scaleX(0.8500);">1</div>
<div class="a edit" style="left:747.7px;top:307.4px;width:68px;height:26px;"></div>
<div class="a t " style="left:756.2px;top:311.56px;font:14px/14px 'Liberation Sans',sans-serif;color:#2a2a2a;transform:scaleX(0.8500);">330</div>
<div class="a btnd" style="left:823.6px;top:307.4px;width:56.4px;height:27px;"></div>
<div class="a " style="left:828.6px;top:312.4px;width:28.4px;height:17.2px;background:#080890;border:1px solid #202020;"></div>
<svg class="a" style="left:867.6px;top:321.9px" width="8" height="8"><path d="M0.5 1.5 H6.5 L3.5 6.5Z" fill="#000"/></svg>
<div class="a edit" style="left:892px;top:307.7px;width:45.5px;height:25px;"></div>
<div class="a btn" style="left:916.5px;top:309.7px;width:20.2px;height:11px;"></div>
<div class="a btn" style="left:916.5px;top:320.7px;width:20.2px;height:11.2px;"></div>
<svg class="a" style="left:916px;top:309.7px" width="20" height="22"><path d="M7.8 7.2 L10.8 4.2 L13.8 7.2Z M7.8 15.2 L10.8 18.2 L13.8 15.2Z" fill="#000"/></svg>
<div class="a t " style="left:895px;top:311.46px;font:14px/14px 'Liberation Sans',sans-serif;color:#2a2a2a;transform:scaleX(0.8500);">3</div>
<div class="a edit" style="left:950.8px;top:307.7px;width:45.5px;height:25px;"></div>
<div class="a btn" style="left:975.3px;top:309.7px;width:20.2px;height:11px;"></div>
<div class="a btn" style="left:975.3px;top:320.7px;width:20.2px;height:11.2px;"></div>
<svg class="a" style="left:974.8px;top:309.7px" width="20" height="22"><path d="M7.8 7.2 L10.8 4.2 L13.8 7.2Z M7.8 15.2 L10.8 18.2 L13.8 15.2Z" fill="#000"/></svg>
<div class="a t " style="left:953.8px;top:311.46px;font:14px/14px 'Liberation Sans',sans-serif;color:#2a2a2a;transform:scaleX(0.8500);">2</div>
<div class="a edit" style="left:469px;top:338.45px;width:67.3px;height:26px;"></div>
<div class="a t " style="left:482.7px;top:342.61px;font:14px/14px 'Liberation Sans',sans-serif;color:#2a2a2a;transform:scaleX(0.8500);">6.3</div>
<div class="a btnd" style="left:544.2px;top:338.45px;width:56.8px;height:27px;"></div>
<div class="a " style="left:549.2px;top:343.45px;width:28.4px;height:17.2px;background:#000;border:1px solid #202020;"></div>
<svg class="a" style="left:588.2px;top:352.95px" width="8" height="8"><path d="M0.5 1.5 H6.5 L3.5 6.5Z" fill="#000"/></svg>
<div class="a edit" style="left:612.9px;top:338.75px;width:45.5px;height:25px;"></div>
<div class="a btn" style="left:637.4px;top:340.75px;width:20.2px;height:11px;"></div>
<div class="a btn" style="left:637.4px;top:351.75px;width:20.2px;height:11.2px;"></div>
<svg class="a" style="left:636.9px;top:340.75px" width="20" height="22"><path d="M7.8 7.2 L10.8 4.2 L13.8 7.2Z M7.8 15.2 L10.8 18.2 L13.8 15.2Z" fill="#000"/></svg>
<div class="a t " style="left:615.9px;top:342.51px;font:14px/14px 'Liberation Sans',sans-serif;color:#2a2a2a;transform:scaleX(0.8500);">2</div>
<div class="a edit" style="left:671.8px;top:338.75px;width:45.5px;height:25px;"></div>
<div class="a btn" style="left:696.3px;top:340.75px;width:20.2px;height:11px;"></div>
<div class="a btn" style="left:696.3px;top:351.75px;width:20.2px;height:11.2px;"></div>
<svg class="a" style="left:695.8px;top:340.75px" width="20" height="22"><path d="M7.8 7.2 L10.8 4.2 L13.8 7.2Z M7.8 15.2 L10.8 18.2 L13.8 15.2Z" fill="#000"/></svg>
<div class="a t " style="left:674.8px;top:342.51px;font:14px/14px 'Liberation Sans',sans-serif;color:#2a2a2a;transform:scaleX(0.8500);">1</div>
<div class="a edit" style="left:747.7px;top:338.45px;width:68px;height:26px;"></div>
<div class="a t " style="left:756.2px;top:342.61px;font:14px/14px 'Liberation Sans',sans-serif;color:#2a2a2a;transform:scaleX(0.8500);">500</div>
<div class="a btnd" style="left:823.6px;top:338.45px;width:56.4px;height:27px;"></div>
<div class="a " style="left:828.6px;top:343.45px;width:28.4px;height:17.2px;background:#0018f8;border:1px solid #202020;"></div>
<svg class="a" style="left:867.6px;top:352.95px" width="8" height="8"><path d="M0.5 1.5 H6.5 L3.5 6.5Z" fill="#000"/></svg>
<div class="a edit" style="left:892px;top:338.75px;width:45.5px;height:25px;"></div>
<div class="a btn" style="left:916.5px;top:340.75px;width:20.2px;height:11px;"></div>
<div class="a btn" style="left:916.5px;top:351.75px;width:20.2px;height:11.2px;"></div>
<svg class="a" style="left:916px;top:340.75px" width="20" height="22"><path d="M7.8 7.2 L10.8 4.2 L13.8 7.2Z M7.8 15.2 L10.8 18.2 L13.8 15.2Z" fill="#000"/></svg>
<div class="a t " style="left:895px;top:342.51px;font:14px/14px 'Liberation Sans',sans-serif;color:#2a2a2a;transform:scaleX(0.8500);">4</div>
<div class="a edit" style="left:950.8px;top:338.75px;width:45.5px;height:25px;"></div>
<div class="a btn" style="left:975.3px;top:340.75px;width:20.2px;height:11px;"></div>
<div class="a btn" style="left:975.3px;top:351.75px;width:20.2px;height:11.2px;"></div>
<svg class="a" style="left:974.8px;top:340.75px" width="20" height="22"><path d="M7.8 7.2 L10.8 4.2 L13.8 7.2Z M7.8 15.2 L10.8 18.2 L13.8 15.2Z" fill="#000"/></svg>
<div class="a t " style="left:953.8px;top:342.51px;font:14px/14px 'Liberation Sans',sans-serif;color:#2a2a2a;transform:scaleX(0.8500);">2</div>
<div class="a edit" style="left:469px;top:369.5px;width:67.3px;height:26px;"></div>
<div class="a t " style="left:480px;top:373.66px;font:14px/14px 'Liberation Sans',sans-serif;color:#2a2a2a;transform:scaleX(0.8500);">10.5</div>
<div class="a btnd" style="left:544.2px;top:369.5px;width:56.8px;height:27px;"></div>
<div class="a " style="left:549.2px;top:374.5px;width:28.4px;height:17.2px;background:#000;border:1px solid #202020;"></div>
<svg class="a" style="left:588.2px;top:384px" width="8" height="8"><path d="M0.5 1.5 H6.5 L3.5 6.5Z" fill="#000"/></svg>
<div class="a edit" style="left:612.9px;top:369.8px;width:45.5px;height:25px;"></div>
<div class="a btn" style="left:637.4px;top:371.8px;width:20.2px;height:11px;"></div>
<div class="a btn" style="left:637.4px;top:382.8px;width:20.2px;height:11.2px;"></div>
<svg class="a" style="left:636.9px;top:371.8px" width="20" height="22"><path d="M7.8 7.2 L10.8 4.2 L13.8 7.2Z M7.8 15.2 L10.8 18.2 L13.8 15.2Z" fill="#000"/></svg>
<div class="a t " style="left:615.9px;top:373.56px;font:14px/14px 'Liberation Sans',sans-serif;color:#2a2a2a;transform:scaleX(0.8500);">2</div>
<div class="a edit" style="left:671.8px;top:369.8px;width:45.5px;height:25px;"></div>
<div class="a btn" style="left:696.3px;top:371.8px;width:20.2px;height:11px;"></div>
<div class="a btn" style="left:696.3px;top:382.8px;width:20.2px;height:11.2px;"></div>
<svg class="a" style="left:695.8px;top:371.8px" width="20" height="22"><path d="M7.8 7.2 L10.8 4.2 L13.8 7.2Z M7.8 15.2 L10.8 18.2 L13.8 15.2Z" fill="#000"/></svg>
<div class="a t " style="left:674.8px;top:373.56px;font:14px/14px 'Liberation Sans',sans-serif;color:#2a2a2a;transform:scaleX(0.8500);">1</div>
<div class="a edit" style="left:747.7px;top:369.5px;width:68px;height:26px;"></div>
<div class="a t " style="left:756.2px;top:373.66px;font:14px/14px 'Liberation Sans',sans-serif;color:#2a2a2a;transform:scaleX(0.8500);">750</div>
<div class="a btnd" style="left:823.6px;top:369.5px;width:56.4px;height:27px;"></div>
<div class="a " style="left:828.6px;top:374.5px;width:28.4px;height:17.2px;background:#6a0078;border:1px solid #202020;"></div>
<svg class="a" style="left:867.6px;top:384px" width="8" height="8"><path d="M0.5 1.5 H6.5 L3.5 6.5Z" fill="#000"/></svg>
<div class="a edit" style="left:892px;top:369.8px;width:45.5px;height:25px;"></div>
<div class="a btn" style="left:916.5px;top:371.8px;width:20.2px;height:11px;"></div>
<div class="a btn" style="left:916.5px;top:382.8px;width:20.2px;height:11.2px;"></div>
<svg class="a" style="left:916px;top:371.8px" width="20" height="22"><path d="M7.8 7.2 L10.8 4.2 L13.8 7.2Z M7.8 15.2 L10.8 18.2 L13.8 15.2Z" fill="#000"/></svg>
<div class="a t " style="left:895px;top:373.56px;font:14px/14px 'Liberation Sans',sans-serif;color:#2a2a2a;transform:scaleX(0.8500);">5</div>
<div class="a edit" style="left:950.8px;top:369.8px;width:45.5px;height:25px;"></div>
<div class="a btn" style="left:975.3px;top:371.8px;width:20.2px;height:11px;"></div>
<div class="a btn" style="left:975.3px;top:382.8px;width:20.2px;height:11.2px;"></div>
<svg class="a" style="left:974.8px;top:371.8px" width="20" height="22"><path d="M7.8 7.2 L10.8 4.2 L13.8 7.2Z M7.8 15.2 L10.8 18.2 L13.8 15.2Z" fill="#000"/></svg>
<div class="a t " style="left:953.8px;top:373.56px;font:14px/14px 'Liberation Sans',sans-serif;color:#2a2a2a;transform:scaleX(0.8500);">3</div>
<div class="a edit" style="left:469px;top:400.55px;width:67.3px;height:26px;"></div>
<div class="a t " style="left:479.6px;top:404.71px;font:14px/14px 'Liberation Sans',sans-serif;color:#2a2a2a;transform:scaleX(0.8500);">13.8</div>
<div class="a btnd" style="left:544.2px;top:400.55px;width:56.8px;height:27px;"></div>
<div class="a " style="left:549.2px;top:405.55px;width:28.4px;height:17.2px;background:#000;border:1px solid #202020;"></div>
<svg class="a" style="left:588.2px;top:415.05px" width="8" height="8"><path d="M0.5 1.5 H6.5 L3.5 6.5Z" fill="#000"/></svg>
<div class="a edit" style="left:612.9px;top:400.85px;width:45.5px;height:25px;"></div>
<div class="a btn" style="left:637.4px;top:402.85px;width:20.2px;height:11px;"></div>
<div class="a btn" style="left:637.4px;top:413.85px;width:20.2px;height:11.2px;"></div>
<svg class="a" style="left:636.9px;top:402.85px" width="20" height="22"><path d="M7.8 7.2 L10.8 4.2 L13.8 7.2Z M7.8 15.2 L10.8 18.2 L13.8 15.2Z" fill="#000"/></svg>
<div class="a t " style="left:615.9px;top:404.61px;font:14px/14px 'Liberation Sans',sans-serif;color:#2a2a2a;transform:scaleX(0.8500);">2</div>
<div class="a edit" style="left:671.8px;top:400.85px;width:45.5px;height:25px;"></div>
<div class="a btn" style="left:696.3px;top:402.85px;width:20.2px;height:11px;"></div>
<div class="a btn" style="left:696.3px;top:413.85px;width:20.2px;height:11.2px;"></div>
<svg class="a" style="left:695.8px;top:402.85px" width="20" height="22"><path d="M7.8 7.2 L10.8 4.2 L13.8 7.2Z M7.8 15.2 L10.8 18.2 L13.8 15.2Z" fill="#000"/></svg>
<div class="a t " style="left:674.8px;top:404.61px;font:14px/14px 'Liberation Sans',sans-serif;color:#2a2a2a;transform:scaleX(0.8500);">1</div>
<div class="a edit" style="left:747.7px;top:400.55px;width:68px;height:26px;"></div>
<div class="a t " style="left:753.7px;top:404.71px;font:14px/14px 'Liberation Sans',sans-serif;color:#2a2a2a;transform:scaleX(0.8500);">1150</div>
<div class="a btnd" style="left:823.6px;top:400.55px;width:56.4px;height:27px;"></div>
<div class="a " style="left:828.6px;top:405.55px;width:28.4px;height:17.2px;background:#d8086a;border:1px solid #202020;"></div>
<svg class="a" style="left:867.6px;top:415.05px" width="8" height="8"><path d="M0.5 1.5 H6.5 L3.5 6.5Z" fill="#000"/></svg>
<div class="a edit" style="left:892px;top:400.85px;width:45.5px;height:25px;"></div>
<div class="a btn" style="left:916.5px;top:402.85px;width:20.2px;height:11px;"></div>
<div class="a btn" style="left:916.5px;top:413.85px;width:20.2px;height:11.2px;"></div>
<svg class="a" style="left:916px;top:402.85px" width="20" height="22"><path d="M7.8 7.2 L10.8 4.2 L13.8 7.2Z M7.8 15.2 L10.8 18.2 L13.8 15.2Z" fill="#000"/></svg>
<div class="a t " style="left:895px;top:404.61px;font:14px/14px 'Liberation Sans',sans-serif;color:#2a2a2a;transform:scaleX(0.8500);">5</div>
<div class="a edit" style="left:950.8px;top:400.85px;width:45.5px;height:25px;"></div>
<div class="a btn" style="left:975.3px;top:402.85px;width:20.2px;height:11px;"></div>
<div class="a btn" style="left:975.3px;top:413.85px;width:20.2px;height:11.2px;"></div>
<svg class="a" style="left:974.8px;top:402.85px" width="20" height="22"><path d="M7.8 7.2 L10.8 4.2 L13.8 7.2Z M7.8 15.2 L10.8 18.2 L13.8 15.2Z" fill="#000"/></svg>
<div class="a t " style="left:953.8px;top:404.61px;font:14px/14px 'Liberation Sans',sans-serif;color:#2a2a2a;transform:scaleX(0.8500);">3</div>
<div class="a edit" style="left:469px;top:431.6px;width:67.3px;height:26px;"></div>
<div class="a t " style="left:479.6px;top:435.76px;font:14px/14px 'Liberation Sans',sans-serif;color:#2a2a2a;transform:scaleX(0.8500);">15.75</div>
<div class="a btnd" style="left:544.2px;top:431.6px;width:56.8px;height:27px;"></div>
<div class="a " style="left:549.2px;top:436.6px;width:28.4px;height:17.2px;background:#083068;border:1px solid #202020;"></div>
<svg class="a" style="left:588.2px;top:446.1px" width="8" height="8"><path d="M0.5 1.5 H6.5 L3.5 6.5Z" fill="#000"/></svg>
<div class="a edit" style="left:612.9px;top:431.9px;width:45.5px;height:25px;"></div>
<div class="a btn" style="left:637.4px;top:433.9px;width:20.2px;height:11px;"></div>
<div class="a btn" style="left:637.4px;top:444.9px;width:20.2px;height:11.2px;"></div>
<svg class="a" style="left:636.9px;top:433.9px" width="20" height="22"><path d="M7.8 7.2 L10.8 4.2 L13.8 7.2Z M7.8 15.2 L10.8 18.2 L13.8 15.2Z" fill="#000"/></svg>
<div class="a t " style="left:615.9px;top:435.66px;font:14px/14px 'Liberation Sans',sans-serif;color:#2a2a2a;transform:scaleX(0.8500);">2</div>
<div class="a edit" style="left:671.8px;top:431.9px;width:45.5px;height:25px;"></div>
<div class="a btn" style="left:696.3px;top:433.9px;width:20.2px;height:11px;"></div>
<div class="a btn" style="left:696.3px;top:444.9px;width:20.2px;height:11.2px;"></div>
<svg class="a" style="left:695.8px;top:433.9px" width="20" height="22"><path d="M7.8 7.2 L10.8 4.2 L13.8 7.2Z M7.8 15.2 L10.8 18.2 L13.8 15.2Z" fill="#000"/></svg>
<div class="a t " style="left:674.8px;top:435.66px;font:14px/14px 'Liberation Sans',sans-serif;color:#2a2a2a;transform:scaleX(0.8500);">1</div>
<div class="a edit" style="left:747.7px;top:431.6px;width:68px;height:26px;"></div>
<div class="a t " style="left:762.6px;top:435.76px;font:14px/14px 'Liberation Sans',sans-serif;color:#2a2a2a;transform:scaleX(0.8500);">0</div>
<div class="a btnd" style="left:823.6px;top:431.6px;width:56.4px;height:27px;"></div>
<div class="a " style="left:828.6px;top:436.6px;width:28.4px;height:17.2px;background:#000;border:1px solid #202020;"></div>
<svg class="a" style="left:867.6px;top:446.1px" width="8" height="8"><path d="M0.5 1.5 H6.5 L3.5 6.5Z" fill="#000"/></svg>
<div class="a edit" style="left:892px;top:431.9px;width:45.5px;height:25px;"></div>
<div class="a btn" style="left:916.5px;top:433.9px;width:20.2px;height:11px;"></div>
<div class="a btn" style="left:916.5px;top:444.9px;width:20.2px;height:11.2px;"></div>
<svg class="a" style="left:916px;top:433.9px" width="20" height="22"><path d="M7.8 7.2 L10.8 4.2 L13.8 7.2Z M7.8 15.2 L10.8 18.2 L13.8 15.2Z" fill="#000"/></svg>
<div class="a t " style="left:895px;top:435.66px;font:14px/14px 'Liberation Sans',sans-serif;color:#2a2a2a;transform:scaleX(0.8500);">2</div>
<div class="a edit" style="left:950.8px;top:431.9px;width:45.5px;height:25px;"></div>
<div class="a btn" style="left:975.3px;top:433.9px;width:20.2px;height:11px;"></div>
<div class="a btn" style="left:975.3px;top:444.9px;width:20.2px;height:11.2px;"></div>
<svg class="a" style="left:974.8px;top:433.9px" width="20" height="22"><path d="M7.8 7.2 L10.8 4.2 L13.8 7.2Z M7.8 15.2 L10.8 18.2 L13.8 15.2Z" fill="#000"/></svg>
<div class="a t " style="left:953.8px;top:435.66px;font:14px/14px 'Liberation Sans',sans-serif;color:#2a2a2a;transform:scaleX(0.8500);">1</div>
<div class="a edit" style="left:469px;top:462.65px;width:67.3px;height:26px;"></div>
<div class="a t " style="left:479.6px;top:466.81px;font:14px/14px 'Liberation Sans',sans-serif;color:#2a2a2a;transform:scaleX(0.8500);">20</div>
<div class="a btnd" style="left:544.2px;top:462.65px;width:56.8px;height:27px;"></div>
<div class="a " style="left:549.2px;top:467.65px;width:28.4px;height:17.2px;background:#083068;border:1px solid #202020;"></div>
<svg class="a" style="left:588.2px;top:477.15px" width="8" height="8"><path d="M0.5 1.5 H6.5 L3.5 6.5Z" fill="#000"/></svg>
<div class="a edit" style="left:612.9px;top:462.95px;width:45.5px;height:25px;"></div>
<div class="a btn" style="left:637.4px;top:464.95px;width:20.2px;height:11px;"></div>
<div class="a btn" style="left:637.4px;top:475.95px;width:20.2px;height:11.2px;"></div>
<svg class="a" style="left:636.9px;top:464.95px" width="20" height="22"><path d="M7.8 7.2 L10.8 4.2 L13.8 7.2Z M7.8 15.2 L10.8 18.2 L13.8 15.2Z" fill="#000"/></svg>
<div class="a t " style="left:615.9px;top:466.71px;font:14px/14px 'Liberation Sans',sans-serif;color:#2a2a2a;transform:scaleX(0.8500);">3</div>
<div class="a edit" style="left:671.8px;top:462.95px;width:45.5px;height:25px;"></div>
<div class="a btn" style="left:696.3px;top:464.95px;width:20.2px;height:11px;"></div>
<div class="a btn" style="left:696.3px;top:475.95px;width:20.2px;height:11.2px;"></div>
<svg class="a" style="left:695.8px;top:464.95px" width="20" height="22"><path d="M7.8 7.2 L10.8 4.2 L13.8 7.2Z M7.8 15.2 L10.8 18.2 L13.8 15.2Z" fill="#000"/></svg>
<div class="a t " style="left:674.8px;top:466.71px;font:14px/14px 'Liberation Sans',sans-serif;color:#2a2a2a;transform:scaleX(0.8500);">1</div>
<div class="a edit" style="left:747.7px;top:462.65px;width:68px;height:26px;"></div>
<div class="a t " style="left:762.6px;top:466.81px;font:14px/14px 'Liberation Sans',sans-serif;color:#2a2a2a;transform:scaleX(0.8500);">0</div>
<div class="a btnd" style="left:823.6px;top:462.65px;width:56.4px;height:27px;"></div>
<div class="a " style="left:828.6px;top:467.65px;width:28.4px;height:17.2px;background:#000;border:1px solid #202020;"></div>
<svg class="a" style="left:867.6px;top:477.15px" width="8" height="8"><path d="M0.5 1.5 H6.5 L3.5 6.5Z" fill="#000"/></svg>
<div class="a edit" style="left:892px;top:462.95px;width:45.5px;height:25px;"></div>
<div class="a btn" style="left:916.5px;top:464.95px;width:20.2px;height:11px;"></div>
<div class="a btn" style="left:916.5px;top:475.95px;width:20.2px;height:11.2px;"></div>
<svg class="a" style="left:916px;top:464.95px" width="20" height="22"><path d="M7.8 7.2 L10.8 4.2 L13.8 7.2Z M7.8 15.2 L10.8 18.2 L13.8 15.2Z" fill="#000"/></svg>
<div class="a t " style="left:895px;top:466.71px;font:14px/14px 'Liberation Sans',sans-serif;color:#2a2a2a;transform:scaleX(0.8500);">2</div>
<div class="a edit" style="left:950.8px;top:462.95px;width:45.5px;height:25px;"></div>
<div class="a btn" style="left:975.3px;top:464.95px;width:20.2px;height:11px;"></div>
<div class="a btn" style="left:975.3px;top:475.95px;width:20.2px;height:11.2px;"></div>
<svg class="a" style="left:974.8px;top:464.95px" width="20" height="22"><path d="M7.8 7.2 L10.8 4.2 L13.8 7.2Z M7.8 15.2 L10.8 18.2 L13.8 15.2Z" fill="#000"/></svg>
<div class="a t " style="left:953.8px;top:466.71px;font:14px/14px 'Liberation Sans',sans-serif;color:#2a2a2a;transform:scaleX(0.8500);">1</div>
<div class="a edit" style="left:469px;top:493.7px;width:67.3px;height:26px;"></div>
<div class="a t " style="left:480.5px;top:497.86px;font:14px/14px 'Liberation Sans',sans-serif;color:#2a2a2a;transform:scaleX(0.8500);">37</div>
<div class="a btnd" style="left:544.2px;top:493.7px;width:56.8px;height:27px;"></div>
<div class="a " style="left:549.2px;top:498.7px;width:28.4px;height:17.2px;background:#083068;border:1px solid #202020;"></div>
<svg class="a" style="left:588.2px;top:508.2px" width="8" height="8"><path d="M0.5 1.5 H6.5 L3.5 6.5Z" fill="#000"/></svg>
<div class="a edit" style="left:612.9px;top:494px;width:45.5px;height:25px;"></div>
<div class="a btn" style="left:637.4px;top:496px;width:20.2px;height:11px;"></div>
<div class="a btn" style="left:637.4px;top:507px;width:20.2px;height:11.2px;"></div>
<svg class="a" style="left:636.9px;top:496px" width="20" height="22"><path d="M7.8 7.2 L10.8 4.2 L13.8 7.2Z M7.8 15.2 L10.8 18.2 L13.8 15.2Z" fill="#000"/></svg>
<div class="a t " style="left:615.9px;top:497.76px;font:14px/14px 'Liberation Sans',sans-serif;color:#2a2a2a;transform:scaleX(0.8500);">3</div>
<div class="a edit" style="left:671.8px;top:494px;width:45.5px;height:25px;"></div>
<div class="a btn" style="left:696.3px;top:496px;width:20.2px;height:11px;"></div>
<div class="a btn" style="left:696.3px;top:507px;width:20.2px;height:11.2px;"></div>
<svg class="a" style="left:695.8px;top:496px" width="20" height="22"><path d="M7.8 7.2 L10.8 4.2 L13.8 7.2Z M7.8 15.2 L10.8 18.2 L13.8 15.2Z" fill="#000"/></svg>
<div class="a t " style="left:674.8px;top:497.76px;font:14px/14px 'Liberation Sans',sans-serif;color:#2a2a2a;transform:scaleX(0.8500);">1</div>
<div class="a edit" style="left:747.7px;top:493.7px;width:68px;height:26px;"></div>
<div class="a t " style="left:762.6px;top:497.86px;font:14px/14px 'Liberation Sans',sans-serif;color:#2a2a2a;transform:scaleX(0.8500);">0</div>
<div class="a btnd" style="left:823.6px;top:493.7px;width:56.4px;height:27px;"></div>
<div class="a " style="left:828.6px;top:498.7px;width:28.4px;height:17.2px;background:#000;border:1px solid #202020;"></div>
<svg class="a" style="left:867.6px;top:508.2px" width="8" height="8"><path d="M0.5 1.5 H6.5 L3.5 6.5Z" fill="#000"/></svg>
<div class="a edit" style="left:892px;top:494px;width:45.5px;height:25px;"></div>
<div class="a btn" style="left:916.5px;top:496px;width:20.2px;height:11px;"></div>
<div class="a btn" style="left:916.5px;top:507px;width:20.2px;height:11.2px;"></div>
<svg class="a" style="left:916px;top:496px" width="20" height="22"><path d="M7.8 7.2 L10.8 4.2 L13.8 7.2Z M7.8 15.2 L10.8 18.2 L13.8 15.2Z" fill="#000"/></svg>
<div class="a t " style="left:895px;top:497.76px;font:14px/14px 'Liberation Sans',sans-serif;color:#2a2a2a;transform:scaleX(0.8500);">2</div>
<div class="a edit" style="left:950.8px;top:494px;width:45.5px;height:25px;"></div>
<div class="a btn" style="left:975.3px;top:496px;width:20.2px;height:11px;"></div>
<div class="a btn" style="left:975.3px;top:507px;width:20.2px;height:11.2px;"></div>
<svg class="a" style="left:974.8px;top:496px" width="20" height="22"><path d="M7.8 7.2 L10.8 4.2 L13.8 7.2Z M7.8 15.2 L10.8 18.2 L13.8 15.2Z" fill="#000"/></svg>
<div class="a t " style="left:953.8px;top:497.76px;font:14px/14px 'Liberation Sans',sans-serif;color:#2a2a2a;transform:scaleX(0.8500);">1</div>
<div class="a edit" style="left:469px;top:524.75px;width:67.3px;height:26px;"></div>
<div class="a t " style="left:477px;top:528.91px;font:14px/14px 'Liberation Sans',sans-serif;color:#2a2a2a;transform:scaleX(0.8500);">115</div>
<div class="a btnd" style="left:544.2px;top:524.75px;width:56.8px;height:27px;"></div>
<div class="a " style="left:549.2px;top:529.75px;width:28.4px;height:17.2px;background:#3a0000;border:1px solid #202020;"></div>
<svg class="a" style="left:588.2px;top:539.25px" width="8" height="8"><path d="M0.5 1.5 H6.5 L3.5 6.5Z" fill="#000"/></svg>
<div class="a edit" style="left:612.9px;top:525.05px;width:45.5px;height:25px;"></div>
<div class="a btn" style="left:637.4px;top:527.05px;width:20.2px;height:11px;"></div>
<div class="a btn" style="left:637.4px;top:538.05px;width:20.2px;height:11.2px;"></div>
<svg class="a" style="left:636.9px;top:527.05px" width="20" height="22"><path d="M7.8 7.2 L10.8 4.2 L13.8 7.2Z M7.8 15.2 L10.8 18.2 L13.8 15.2Z" fill="#000"/></svg>
<div class="a t " style="left:615.9px;top:528.81px;font:14px/14px 'Liberation Sans',sans-serif;color:#2a2a2a;transform:scaleX(0.8500);">3</div>
<div class="a edit" style="left:671.8px;top:525.05px;width:45.5px;height:25px;"></div>
<div class="a btn" style="left:696.3px;top:527.05px;width:20.2px;height:11px;"></div>
<div class="a btn" style="left:696.3px;top:538.05px;width:20.2px;height:11.2px;"></div>
<svg class="a" style="left:695.8px;top:527.05px" width="20" height="22"><path d="M7.8 7.2 L10.8 4.2 L13.8 7.2Z M7.8 15.2 L10.8 18.2 L13.8 15.2Z" fill="#000"/></svg>
<div class="a t " style="left:674.8px;top:528.81px;font:14px/14px 'Liberation Sans',sans-serif;color:#2a2a2a;transform:scaleX(0.8500);">2</div>
<div class="a edit" style="left:747.7px;top:524.75px;width:68px;height:26px;"></div>
<div class="a t " style="left:762.6px;top:528.91px;font:14px/14px 'Liberation Sans',sans-serif;color:#2a2a2a;transform:scaleX(0.8500);">0</div>
<div class="a btnd" style="left:823.6px;top:524.75px;width:56.4px;height:27px;"></div>
<div class="a " style="left:828.6px;top:529.75px;width:28.4px;height:17.2px;background:#000;border:1px solid #202020;"></div>
<svg class="a" style="left:867.6px;top:539.25px" width="8" height="8"><path d="M0.5 1.5 H6.5 L3.5 6.5Z" fill="#000"/></svg>
<div class="a edit" style="left:892px;top:525.05px;width:45.5px;height:25px;"></div>
<div class="a btn" style="left:916.5px;top:527.05px;width:20.2px;height:11px;"></div>
<div class="a btn" style="left:916.5px;top:538.05px;width:20.2px;height:11.2px;"></div>
<svg class="a" style="left:916px;top:527.05px" width="20" height="22"><path d="M7.8 7.2 L10.8 4.2 L13.8 7.2Z M7.8 15.2 L10.8 18.2 L13.8 15.2Z" fill="#000"/></svg>
<div class="a t " style="left:895px;top:528.81px;font:14px/14px 'Liberation Sans',sans-serif;color:#2a2a2a;transform:scaleX(0.8500);">2</div>
<div class="a edit" style="left:950.8px;top:525.05px;width:45.5px;height:25px;"></div>
<div class="a btn" style="left:975.3px;top:527.05px;width:20.2px;height:11px;"></div>
<div class="a btn" style="left:975.3px;top:538.05px;width:20.2px;height:11.2px;"></div>
<svg class="a" style="left:974.8px;top:527.05px" width="20" height="22"><path d="M7.8 7.2 L10.8 4.2 L13.8 7.2Z M7.8 15.2 L10.8 18.2 L13.8 15.2Z" fill="#000"/></svg>
<div class="a t " style="left:953.8px;top:528.81px;font:14px/14px 'Liberation Sans',sans-serif;color:#2a2a2a;transform:scaleX(0.8500);">1</div>
<div class="a btn" style="left:483.3px;top:563.2px;width:166.7px;height:26.6px;"></div>
<div class="a t d" style="left:497.9px;top:569.96px;font:13px/13px 'Liberation Sans',sans-serif;color:#2a2a2a;transform:scaleX(1.0437);">Начальные установки</div>
<div class="a btnd" style="left:715.3px;top:611.8px;width:95px;height:26.5px;"></div>
<div class="a t d" style="left:754.6px;top:618.51px;font:13px/13px 'Liberation Sans',sans-serif;color:#2a2a2a;transform:scaleX(0.8518);">OK</div>
<div class="a btn" style="left:817.7px;top:611.8px;width:95.1px;height:26.5px;"></div>
<div class="a t d" style="left:841.9px;top:618.51px;font:13px/13px 'Liberation Sans',sans-serif;color:#2a2a2a;transform:scaleX(1.0076);">Отмена</div>
<div class="a btn" style="left:920.2px;top:611.8px;width:95.3px;height:26.8px;"></div>
<div class="a t d" style="left:933.6px;top:619.66px;font:13px/13px 'Liberation Sans',sans-serif;color:#ffffff;transform:scaleX(1.0272);">Применить</div>
<div class="a t d" style="left:932.6px;top:618.66px;font:13px/13px 'Liberation Sans',sans-serif;color:#a0a0a0;transform:scaleX(1.0272);">Применить</div>
<svg class="a" style="left:0;top:0" width="1024" height="667">
<path d="M451.6 83 L150 151.4" stroke="#a86c2c" stroke-width="4.6"/>
<path d="M133.8 155.2 L157.7 139.9 L162 158.6Z" fill="#a86c2c"/>
<path d="M635.2 123.9 L690 165.8" stroke="#a86c2c" stroke-width="5"/>
<path d="M707.1 179 L691.9 155.4 L680.3 170.4Z" fill="#a86c2c"/>
</svg>
</body></html>
